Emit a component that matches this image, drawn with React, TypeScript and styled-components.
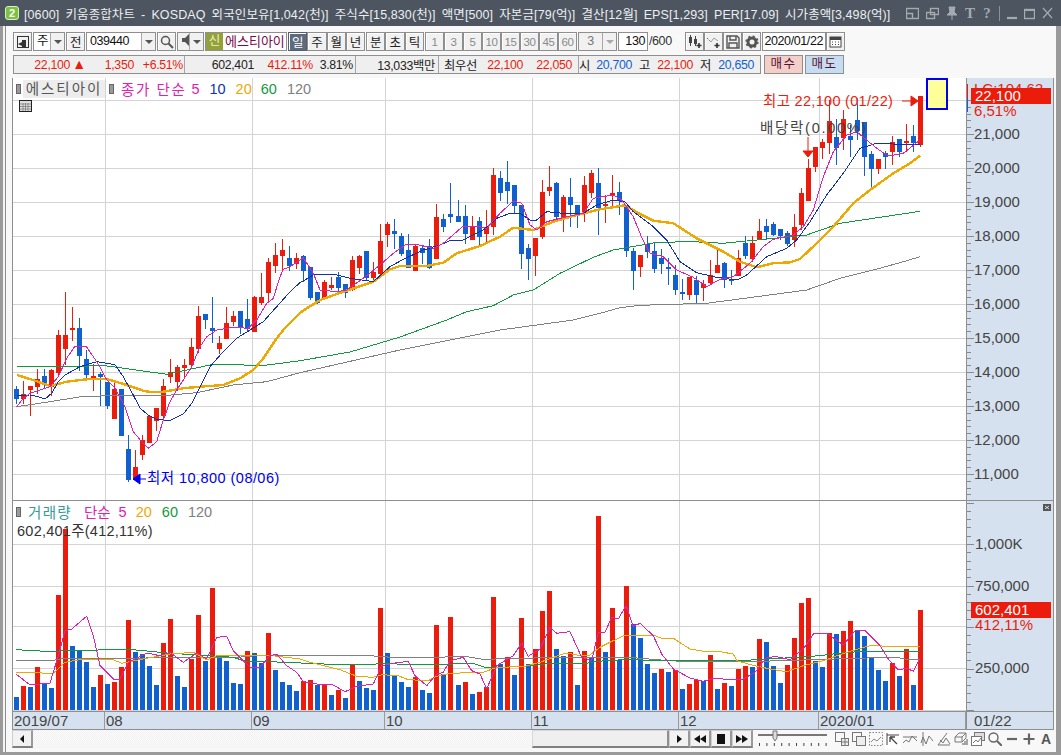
import React from 'react';
import styled, { createGlobalStyle } from 'styled-components';

const RED = '#ec1c0c';
const BLUE = '#1160cf';
const ORANGE = '#f0a800';
const GREEN = '#0f9a3e';
const GRAY = '#808080';
const MAGENTA = '#e020b0';
const NAVY = '#1030b0';
const FONT = `"Liberation Sans", "Noto Sans CJK KR", sans-serif`;

const GlobalStyle = createGlobalStyle`
  html, body { margin: 0; padding: 0; background: #999; overflow: hidden; }
  * { box-sizing: border-box; }
`;

const Window = styled.div`
  width: 1061px; height: 755px; display: flex; flex-direction: column;
  background: #9a9a9a; font-family: ${FONT}; overflow: hidden;
`;
const TitleBar = styled.div`
  height: 26px; flex: none; background: #4d5560; display: flex; align-items: center; padding-left: 5px;
`;
const AppBadge = styled.div`
  width: 14px; height: 14px; border-radius: 3px; background: #7cc242; border: 1px solid #d8f0c0;
  color: #fff; font: bold 11px/12px ${FONT}; text-align: center; flex: none;
`;
const TitleText = styled.div`
  margin-left: 5px; width: 880px; flex: none; color: #eceef0; font-size: 12.5px; letter-spacing: 0.1px; word-spacing: 2.5px; white-space: nowrap; overflow: hidden;
`;
const TitleTools = styled.div`
  display: flex; align-items: center; gap: 7px; color: #a4aab2; margin-left: 2px; flex: none;
`;
const TitleGlyph = styled.span`
  font: bold 15px/16px "Liberation Serif", serif; width: 10px; text-align: center; color: #a4aab2;
`;
const TitleDivider = styled.span`
  width: 1px; height: 15px; background: #8b919a;
`;
const Frame = styled.div`
  flex: 1; margin: 0 5px 3px 3px; border-left: 2px solid #f4f4f4; background: #f8f8f8; display: flex; min-height: 0;
`;
const Content = styled.div`
  flex: 1; border-left: 1px solid #8d8d8d; padding: 6px 2px 0 6px; display: flex; flex-direction: column; min-width: 0;
`;
const ToolRow = styled.div`
  height: 19px; flex: none; display: flex; gap: 1px; padding-left: 1px; color: #222; font-size: 13px;
`;
const ToolButton = styled.div<{ $w?: number; $active?: boolean; $off?: boolean }>`
  width: ${p => (p.$w ? `${p.$w}px` : 'auto')}; flex: ${p => (p.$w ? 'none' : '1')}; height: 19px;
  display: flex; align-items: center; justify-content: center;
  border: 1px solid ${p => (p.$active ? '#55606e' : '#8f8f8f')};
  background: ${p => (p.$active ? '#5d6b7d' : '#f1f1f1')};
  color: ${p => (p.$active ? '#fff' : p.$off ? '#8a8a8a' : '#222')};
  font-size: ${p => (p.$off ? 11.5 : 12.5)}px; letter-spacing: -0.3px;
  box-shadow: inset 1px 1px 0 #fff;
`;
const CalendarButton = styled(ToolButton)`
  margin-left: -1px;
`;
const ButtonGroup = styled.div<{ $w: number }>`
  width: ${p => p.$w}px; display: flex; flex: none;
`;
const Combo = styled.div<{ $w: number }>`
  width: ${p => p.$w}px; height: 19px; flex: none; display: flex; background: #fff; border: 1px solid #8f8f8f;
`;
const ComboText = styled.div<{ $off?: boolean; $align?: string }>`
  flex: 1; padding: 0 3px; line-height: 17px; font-size: 12.5px; letter-spacing: -0.45px; color: ${p => (p.$off ? '#777' : '#111')};
  text-align: ${p => p.$align || 'left'}; white-space: nowrap; overflow: hidden; background: ${p => (p.$off ? '#f1f1f1' : '#fff')};
`;
const ComboArrow = styled.div<{ $off?: boolean }>`
  width: 14px; flex: none; background: #f1f1f1; border-left: 1px solid #a8a8a8; position: relative;
  &::after {
    content: ''; position: absolute; left: 3px; top: 7px; border-left: 4px solid transparent; border-right: 4px solid transparent;
    border-top: 4px solid ${p => (p.$off ? '#aaa' : '#555')};
  }
`;
const SignalTag = styled.div`
  width: 17px; background: #94a03a; color: #eef2c0; font-size: 12.5px; line-height: 17px; text-align: center; flex: none;
`;
const StockName = styled.div`
  flex: 1; color: #7c0a47; font-size: 13px; line-height: 17px; padding-left: 2px; white-space: nowrap; overflow: visible;
`;
const NumberField = styled.div<{ $w: number }>`
  width: ${p => p.$w}px; height: 19px; flex: none; background: #fff; border: 1px solid #8f8f8f; text-align: right;
  font-size: 12.5px; line-height: 17px; padding-right: 2px; letter-spacing: -0.4px; color: #111; white-space: nowrap;
`;
const Slash = styled.div`
  width: 35px; flex: none; font-size: 12.5px; line-height: 19px; color: #333; letter-spacing: -0.4px;
`;
const InfoRow = styled.div`
  height: 19px; margin-top: 4px; flex: none; display: flex; padding-left: 1px;
`;
const InfoBar = styled.div`
  width: 748px; display: flex; border: 1px solid #8f8f8f; background: #efefef; flex: none;
`;
const InfoCell = styled.div<{ $w: number; $last?: boolean }>`
  width: ${p => p.$w}px; flex: none; display: flex; align-items: center; border-right: ${p => (p.$last ? 'none' : '1px solid #a5a5a5')};
`;
const Value = styled.span<{ $w: number; $c?: string; $left?: boolean }>`
  width: ${p => p.$w}px; flex: none; text-align: ${p => (p.$left ? 'left' : 'right')}; color: ${p => p.$c || '#222'};
  font-size: 12.3px; letter-spacing: -0.3px; white-space: nowrap;
`;
const UpMark = styled.span`
  font-size: 14px; line-height: 14px; margin-left: 2px; letter-spacing: 0;
`;
const TradeButton = styled.div<{ $bg: string; $first?: boolean }>`
  width: 39px; height: 19px; margin-left: ${p => (p.$first ? 3 : 2)}px; flex: none; background: ${p => p.$bg}; border: 1px solid #8f8f8f;
  font-size: 12.5px; line-height: 17px; text-align: center; color: #5a1030; letter-spacing: 1.5px;
`;
const ChartBox = styled.div`
  margin-top: 4px; width: 1042px; flex: none; display: grid; grid-template-columns: 954px 87px; grid-template-rows: 423px 211px 18px;
  border-left: 1px solid #8f8f8f;
`;
const Pane = styled.div`
  position: relative; background: #fff; overflow: hidden; border-right: 1px solid #8f8f8f;
  border-bottom: 1px solid #8f8f8f;
`;
const AxisPane = styled.div`
  position: relative; background: #d6e1ef; overflow: hidden; border-right: 1px solid #8f8f8f; border-bottom: 1px solid #8f8f8f;
`;
const Drawing = styled.svg`
  display: block; position: absolute; left: 0; top: 0;
  text { font-family: ${FONT}; font-size: 15px; }
`;
const Legend = styled.div<{ $top: number }>`
  position: absolute; left: 3px; top: ${p => p.$top}px; height: 17px; display: flex; align-items: center; font-size: 14.5px; white-space: nowrap;
`;
const Marker = styled.span`
  width: 5px; height: 10px; background: #9a9a9a; border: 1px solid #666; flex: none;
`;
const NameTag = styled.span`
  width: 82px; height: 18px; margin: 0 4px 0 2px; background: #ededed; color: #555; font-size: 14.5px; line-height: 18px;
  text-align: center; letter-spacing: 2px; flex: none;
`;
const LegendItem = styled.span<{ $c: string; $ml: number; $ls?: number }>`
  color: ${p => p.$c}; margin-left: ${p => p.$ml}px; letter-spacing: ${p => p.$ls || 0}px;
`;
const VolumeNote = styled.div`
  position: absolute; left: 4px; top: 18px; font-size: 14.5px; letter-spacing: 0.25px; color: #333; white-space: nowrap;
`;
const GridIcon = styled.svg`
  position: absolute; left: 6px; top: 22px;
`;
const Note = styled.div<{ $x: number; $y: number; $c: string; $ls: number }>`
  position: absolute; left: ${p => p.$x - 13}px; top: ${p => p.$y - 78}px; color: ${p => p.$c}; font-size: 14.5px; line-height: 17px; white-space: nowrap;
  letter-spacing: ${p => p.$ls}px;
`;
const TimeScale = styled.div`
  background: #d6e1ef; position: relative; border-right: 1px solid #8f8f8f; border-bottom: 1px solid #8f8f8f; display: flex;
  font-size: 15px; line-height: 17px; color: #444;
`;
const TimeCell = styled.div<{ $w: number }>`
  width: ${p => p.$w}px; flex: none; padding-left: 1px; border-right: 1px solid #9a9a9a; white-space: nowrap; overflow: hidden;
`;
const TimeEnd = styled.div`
  background: #d6e1ef; border-right: 1px solid #8f8f8f; border-bottom: 1px solid #8f8f8f; padding-left: 7px;
  font-size: 15px; line-height: 17px; color: #444;
`;
const BottomBar = styled.div`
  flex: none; height: 20px; width: 1042px; display: flex; align-items: flex-start; margin-left: 0;
`;
const StepButton = styled.div<{ $w: number }>`
  width: ${p => p.$w}px; height: 18px; flex: none; display: flex; align-items: center; justify-content: center;
  background: #f2f2f2; border: 1px solid #cfcfcf; border-bottom: 2px solid #7f7f7f; border-right: 2px solid #9a9a9a;
`;
const Track = styled.div`
  width: 499px; height: 18px; flex: none;
  background: repeating-conic-gradient(#f1f1f1 0 25%, #fbfbfb 0 50%) 0 0 / 2px 2px;
`;
const Thumb = styled.div`
  width: 137px; height: 18px; flex: none; background: #efefef; border: 1px solid #d8d8d8; border-bottom: 2px solid #7f7f7f; border-right: 2px solid #8f8f8f;
`;
const SliderBox = styled.svg`
  flex: none; margin-left: 5px;
`;
const IconStrip = styled.div`
  display: flex; gap: 3px; margin-left: 7px; height: 18px; align-items: center;
`;
const StripIcon = styled.div<{ $on?: boolean }>`
  width: 14px; height: 18px; flex: none; display: flex; align-items: center; justify-content: center;
  background: ${p => (p.$on ? '#fff' : 'transparent')}; box-shadow: ${p => (p.$on ? '0 0 0 1px #fff' : 'none')};
  font: bold 14px/16px ${FONT}; color: #555;
`;

type Pt = [number, number];
const at = (x0: number, y0: number, a: number[]): Pt[] => {
  const r: Pt[] = [];
  for (let i = 0; i < a.length; i += 2) r.push([x0 + a[i] / 3, y0 + a[i + 1] / 3]);
  return r;
};
const pts = (p: Pt[]) => p.map(q => `${q[0].toFixed(1)},${q[1].toFixed(1)}`).join(' ');

type C = [number, number, number, number, number];
// colour (1 red, 0 blue), body top, body bottom, wick top, wick bottom, in crop coordinates
const c5: C[] = [
  [0,357,387,348,402],[1,372,387,333,402],[1,348,360,348,438],[1,327,351,297,372],[0,318,345,297,354],[1,300,351,297,378],
  [1,195,309,180,318],[1,195,237,66,285],[1,174,177,111,213],[0,174,258,144,303],[0,267,315,240,324],[1,318,330,282,363],
  [0,312,320,305,408],[0,336,408,336,417],[1,357,447,333,447],[0,357,498,357,498],[0,537,630,495,636],[1,591,630,540,630],
  [1,510,555,495,570],[1,438,519,438,519],[1,414,453,414,483],[1,348,438,327,450],[1,306,321,267,339],[1,291,336,285,363],
  [1,285,294,267,321],[1,231,285,204,294],[1,138,237,108,249],[0,132,150,132,177],[0,174,183,81,219],[1,219,237,198,252],
  [1,159,207,111,207],[1,138,156,123,168],[0,123,171,123,192],[0,147,177,87,186],[1,81,186,78,186],[1,81,99,9,105],
];
const c11: C[] = [[1,126,219,114,250],[1,105,138,69,159],[1,90,108,57,150],[0,114,138,78,153],[1,114,132,99,147]];
const c6: C[] = [
  [0,318,363,315,396],[0,351,444,351,450],[0,426,459,426,462],[1,396,444,390,450],[1,405,414,381,420],[0,380,414,366,429],
  [0,402,429,402,444],[1,330,420,318,423],[1,318,354,315,372],[0,303,384,303,390],[1,366,384,336,393],[1,273,372,222,381],
  [1,222,255,216,291],[0,243,252,207,297],[0,258,312,249,318],[0,300,354,252,354],[1,288,363,282,363],[0,294,309,288,342],
  [0,288,354,267,357],[1,201,327,162,327],[0,207,231,192,246],[0,192,201,99,219],[0,198,216,150,216],[0,198,252,165,282],
  [1,228,270,198,270],[0,213,261,201,291],[1,231,252,180,276],[1,75,231,54,255],[0,84,129,63,153],[0,96,123,33,162],
  [0,105,168,105,192],[0,165,312,165,357],[0,294,327,282,390],[1,264,318,264,378],[1,126,262,90,267],[1,111,123,48,138],
  [0,99,201,96,207],[1,141,201,135,246],[0,141,165,84,231],[0,165,189,165,234],[1,105,189,78,216],[1,69,129,60,144],
  [0,99,174,54,255],[1,162,168,135,219],[1,129,138,75,171],[0,126,153,96,195],[0,165,303,165,321],[0,303,363,295,420],
];
const c7: C[] = [
  [1,525,562,525,590],[0,492,516,468,534],[0,513,567,486,579],[0,534,552,507,582],[0,561,566,534,615],[0,585,630,555,645],
  [0,636,639,597,660],[1,591,645,591,660],[0,600,645,588,669],[1,612,624,600,663],[1,585,609,540,612],[1,555,579,501,579],
  [0,549,600,546,624],[0,597,603,570,615],[1,534,588,510,588],[0,489,528,468,537],[1,489,537,468,546],[1,453,480,417,480],
  [0,438,456,417,480],[0,432,465,426,468],[0,447,468,447,480],[0,459,492,453,498],[1,441,480,402,501],[1,339,435,324,450],
  [1,264,363,237,363],[1,201,261,201,276],[1,186,204,177,237],[1,123,189,60,222],[0,171,204,117,255],[1,117,174,90,210],
  [0,168,180,135,231],[0,120,153,54,180],[0,126,231,126,288],[0,222,267,213,324],[1,237,267,237,282],[0,219,231,213,267],
  [1,186,216,168,255],[0,177,216,177,231],[1,183,189,132,216],[0,168,189,135,216],[1,48,195,48,201],
];
const scale = (list: C[], y0: number): C[] => list.map(([k, a, b, d, e]) => [k, y0 + a / 3, y0 + b / 3, y0 + d / 3, y0 + e / 3]);
const CANDLES: C[] = [...scale(c5, 270), ...scale(c11, 220), ...scale(c6, 150), ...scale(c7, 80)];

const barX = (i: number) => Math.round(14 + 7.008 * i);

// colour, crop y of the top of the bar
const V: [number, number][] = [
  [0,594],[1,561],[0,564],[1,504],[0,552],[0,567],[1,288],[1,90],[0,441],[0,455],[0,489],[0,564],[1,528],[0,555],[1,549],[1,504],[1,363],
  [0,459],[0,465],[0,501],[0,558],[1,432],[1,360],[0,531],[0,564],[1,480],[1,348],[0,486],[1,267],[0,477],[0,486],[0,552],[0,555],[1,456],
  [0,462],[0,492],[1,402],[0,513],[0,549],[0,558],[0,576],[1,546],[1,543],[0,558],[1,558],[0,588],[1,573],
  [0,597],[1,498],[0,546],[0,567],[0,573],[1,327],[0,462],[0,531],[0,549],[0,564],[1,534],[0,573],[0,582],[1,378],[0,525],[1,354],[0,558],
  [1,549],[0,585],[1,579],[1,564],[1,294],[0,495],[1,474],[0,528],[1,357],[0,495],[1,450],[1,336],[1,276],[0,450],[0,471],[1,460],[0,558],
  [1,456],[0,474],[1,51],[0,459],[1,327],[0,483],[1,261],[0,375],[0,417],[0,495],[0,522],[1,510],[0,519],[1,513],
  [0,570],[1,555],[1,543],[0,546],[1,468],[0,570],[1,552],[0,561],[1,510],[1,501],[0,504],[1,420],[0,429],[0,501],[0,552],[1,498],[1,417],
  [1,312],[1,297],[0,486],[0,504],[1,402],[0,405],[1,396],[1,366],[0,393],[0,411],[0,477],[0,513],[0,546],[1,492],[0,531],[1,450],[0,558],[1,333],
];

const line5 = [
  ...at(0,270,[50,410,70,385,90,370,115,362,150,350,175,320,200,265,225,228,258,228,280,260,300,290,320,330,345,355,375,410,400,485,425,515,445,535,470,515,490,450,510,395,530,360,550,330,575,290,600,230,620,200,650,180,700,172,745,175,770,150,800,100]),
  ...at(240,220,[100,235,120,170,130,148,150,140,190,113]),
  ...at(300,150,[40,370,60,420,110,425,140,420,190,385,240,345,280,310,320,282,345,282,400,295,430,280,490,228,530,228,560,235,600,190,640,153,665,160,690,225,710,240,740,215,800,200,850,190,880,145,940,135,965,150,1000,200,1020,250]),
  ...at(640,80,[0,462,30,520,70,530,110,570,160,592,200,620,240,598,280,590,330,550,370,500,400,478,460,465,490,440,520,390,550,290,580,215,620,165,650,155,680,180,710,205,745,228,790,220,840,180]),
];
const line10 = [
  ...at(0,270,[50,376,90,375,115,380,135,387,155,370,175,335,195,315,240,290,290,275,345,284,370,320,400,375,420,415,445,435,470,448,510,452,550,432,575,400,600,350,630,290,665,250,710,205,750,180,790,155,830,110,870,65,900,38]),
  ...at(300,150,[40,375,100,372,150,385,220,395,270,350,310,328,370,300,420,285,450,272,490,270,550,240,590,205,630,190,660,190,690,210,710,210,740,185,790,190,850,190,890,165,940,150,975,155,1000,185,1020,200]),
  ...at(640,80,[40,440,80,480,120,545,170,578,230,592,290,600,320,585,380,530,440,505,470,480,510,425,560,345,610,280,660,205,710,190,780,193,840,195]),
];
const line20 = [
  ...at(0,270,[50,315,100,330,150,348,200,335,260,328,320,327,380,345,430,362,450,366,490,365,550,355,600,350,670,345,720,325,760,300,790,265,830,205,850,180,900,128]),
  ...at(300,150,[60,450,130,425,220,395,270,358,300,348,380,348,430,338,470,310,540,288,600,260,640,233,700,240,760,215,830,195,900,178,975,166,1020,192]),
  ...at(640,80,[40,422,100,430,170,475,250,515,300,545,350,562,400,550,450,547,480,537,530,490,580,440,640,370,690,330,760,280,810,250,840,227]),
];
const line60: Pt[] = [
  ...at(0,270,[50,290,240,290,300,285,360,293,430,303,500,313,560,300,630,285,700,283,780,288,900,272]),
  [350,352],[400,337],
  ...at(300,150,[440,510,500,485,580,467,640,435,700,420,780,370,880,322,940,300,1020,286]),
  ...at(640,80,[50,487,160,485,250,490,350,480,500,465,600,430,700,415,840,394]),
];
const line120: Pt[] = [
  ...at(0,270,[50,410,150,395,250,379,350,377,480,378,590,368,700,345,800,335,900,308]),
  [400,350],[500,330],
  ...at(300,150,[820,510,900,490,960,473,1020,466]),
  ...at(640,80,[200,670,350,650,500,630,600,595,700,570,780,548,840,530]),
];

const vol5 = [
  ...at(0,500,[48,525,90,558,150,552,175,470,195,395,215,390,260,352,280,410,300,500,340,540,360,540,385,490,440,462,480,470,510,460,550,490,590,462,620,480,650,415,680,412,700,455,735,490,750,505,780,505,810,470,830,465,860,500,890,520,910,548,950,555,1000,558]),
  ...at(340,500,[15,578,50,562,100,555,125,500,150,495,175,490,205,488,225,530,260,560,290,525,310,520,330,485,370,475,395,515,420,525,440,570,470,500,520,470,545,432,565,472,600,450,630,385,650,403,690,398,725,475,755,485,775,400,795,400,815,355,835,360,858,320,880,382,900,373,940,410,965,465,1000,510]),
  ...at(680,500,[30,537,70,547,100,538,160,542,190,540,225,520,260,475,290,473,330,482,370,450,400,405,440,402,490,438,525,395,555,395,600,440,625,480,655,513,680,508,700,517,720,478]),
];
const vol20 = [
  ...at(0,500,[48,520,160,523,195,490,250,480,335,480,365,493,440,478,510,465,580,460,620,483,650,470,800,468,900,480,930,490,1020,512]),
  ...at(340,500,[50,532,100,535,125,527,175,530,205,542,265,545,290,532,330,523,430,520,470,505,550,503,600,490,660,468,680,462,710,468,750,468,780,445,850,410,940,408,965,418,1000,418]),
  ...at(680,500,[30,450,70,457,120,458,160,465,170,485,215,498,270,510,320,518,370,500,430,485,500,460,570,440,640,442,720,443]),
];
const vol60 = [
  ...at(0,500,[48,452,160,458,195,454,400,452,500,462,700,475,740,488,810,488,1020,497]),
  ...at(340,500,[100,496,140,492,200,498,280,497,400,493,440,507,580,500,620,494,740,493,770,487,850,482,1020,485]),
  ...at(680,500,[180,485,300,478,420,470,500,460,570,457,720,457]),
];
const vol120 = [
  ...at(0,500,[48,484,160,484,190,478,700,476,780,469,1020,469]),
  ...at(340,500,[90,470,170,476,380,473,430,481,620,476,880,476,950,482,1020,487]),
  ...at(680,500,[200,488,400,482,560,477,650,475,680,481,720,481]),
];

const MONTHS = [105, 252, 385, 532, 679, 819];
const Line = ({ p, c, w }: { p: Pt[]; c: string; w: number }) => (
  <polyline points={pts(p)} fill="none" stroke={c} strokeWidth={w} strokeLinejoin="round" shapeRendering="crispEdges" />
);

const PricePlot = () => (
  <Drawing width={953} height={422} viewBox="13 78 953 422">
    {MONTHS.map(x => <rect key={x} x={x} y={78} width={1} height={422} fill="#d4d4d4" />)}
    {Array.from({ length: 12 }, (_, k) => <rect key={k} x={13} y={100 + 34 * k} width={953} height={1} fill="#d4d4d4" />)}
    {CANDLES.map(([k, a, b, d, e], i) => (
      <g key={i} fill={k ? RED : BLUE} shapeRendering="crispEdges">
        <rect x={barX(i) + 2} y={Math.round(d)} width={1} height={Math.max(1, Math.round(e - d))} />
        <rect x={barX(i)} y={Math.round(a)} width={5} height={Math.max(2, Math.round(b - a))} />
      </g>
    ))}
    <Line p={line120} c={GRAY} w={1} />
    <Line p={line60} c={GREEN} w={1} />
    <Line p={line20} c={ORANGE} w={2.4} />
    <Line p={line10} c={NAVY} w={1} />
    <Line p={line5} c={MAGENTA} w={1} />
    <rect x={927} y={79} width={20} height={30} fill="#ffff99" stroke="#0000ee" strokeWidth={2} />
    <path d="M902 101h10M911 96l7 5-7 5z" stroke={RED} fill={RED} />
    <path d="M808 137v14M803 151h10l-5 6z" stroke={RED} fill={RED} />
    <path d="M146 479h-8M140 474l-7 5 7 5z" stroke="#0000ee" fill="#0000ee" />
  </Drawing>
);

const VolumePlot = () => (
  <Drawing width={953} height={210} viewBox="13 502 953 210">
    {MONTHS.map(x => <rect key={x} x={x} y={502} width={1} height={210} fill="#d4d4d4" />)}
    {[545, 587, 627, 669, 711].map(y => <rect key={y} x={13} y={y} width={953} height={1} fill="#d4d4d4" />)}
    {V.map(([k, t], i) => (
      <rect key={i} x={barX(i)} y={Math.round(500 + t / 3)} width={5} height={711 - Math.round(500 + t / 3)} fill={k ? RED : BLUE} shapeRendering="crispEdges" />
    ))}
    <Line p={vol120} c={GRAY} w={1} />
    <Line p={vol60} c={GREEN} w={1} />
    <Line p={vol20} c={ORANGE} w={1} />
    <Line p={vol5} c={MAGENTA} w={1} />
  </Drawing>
);

const PRICES = [21, 20, 19, 18, 17, 16, 15, 14, 13, 12, 11];
const PriceAxis = () => (
  <Drawing width={86} height={422} viewBox="967 78 86 422">
    {Array.from({ length: 60 }, (_, k) => {
      const y = 100 + k * 6.8;
      return <rect key={k} x={967} y={Math.round(y)} width={k % 5 === 0 ? 7 : 4} height={1} fill="#8a8a8a" shapeRendering="crispEdges" />;
    })}
    {PRICES.map((p, i) => (
      <text key={p} x={974} y={139 + 34 * i} fill="#444">{`${p},000`}</text>
    ))}
    <text x={974} y={94} fill={RED}>LC:104.63</text>
    <rect x={967} y={84} width={1} height={14} fill={RED} />
    <rect x={967} y={98} width={1} height={14} fill={BLUE} />
    <rect x={971} y={88} width={80} height={16} fill={RED} />
    <text x={975} y={101} fill="#fff">22,100</text>
    <text x={974} y={116} fill={RED}>6,51%</text>
  </Drawing>
);
const VolumeAxis = () => (
  <Drawing width={86} height={210} viewBox="967 502 86 210">
    {Array.from({ length: 26 }, (_, k) => {
      const y = 711 - k * 8.3;
      return <rect key={k} x={967} y={Math.round(y)} width={k % 5 === 0 ? 7 : 4} height={1} fill="#8a8a8a" shapeRendering="crispEdges" />;
    })}
    <text x={975} y={550} fill="#444">1,000K</text>
    <text x={975} y={592} fill="#444">750,000</text>
    <text x={975} y={674} fill="#444">250,000</text>
    <rect x={971} y={603} width={80} height={16} fill={RED} />
    <text x={975} y={616} fill="#fff">602,401</text>
    <text x={975} y={631} fill={RED}>412,11%</text>
    <rect x={1043} y={505} width={8} height={7} fill="#555" />
    <path d="M1045 507l4 3M1049 507l-4 3" stroke="#fff" strokeWidth={0.8} />
  </Drawing>
);

const S = ({ w = 14, h = 14, children }: { w?: number; h?: number; children: React.ReactNode }) => (
  <svg width={w} height={h} viewBox={`0 0 ${w} ${h}`} fill="none" stroke="currentColor" strokeWidth={1}>{children}</svg>
);

const Play = ({ d }: { d: string }) => (
  <svg width={14} height={10} viewBox="0 0 14 10"><path d={d} fill="#111" /></svg>
);

export default function App() {
  return (
    <Window>
      <GlobalStyle />
      <TitleBar>
        <AppBadge>2</AppBadge>
        <TitleText>[0600] 키움종합차트 - KOSDAQ 외국인보유[1,042(천)] 주식수[15,830(천)] 액면[500] 자본금[79(억)] 결산[12월] EPS[1,293] PER[17.09] 시가총액[3,498(억)]</TitleText>
        <TitleTools>
          <S w={13} h={13}><rect x={.5} y={1.5} width={12} height={10} strokeWidth={1.4} /><path d="M.5 6.5h6v5" strokeWidth={1.4} /></S>
          <S w={13} h={13}><rect x={4.5} y={1.5} width={8} height={6} strokeWidth={1.4} /><rect x={.5} y={5.5} width={8} height={6} strokeWidth={1.4} /></S>
          <S w={12} h={14}><path d="M3 1h6l-1 5 3 3H1l3-3zM6 9v5" fill="currentColor" /></S>
          <TitleGlyph>T</TitleGlyph>
          <TitleGlyph>?</TitleGlyph>
          <TitleDivider />
          <S w={10} h={14}><path d="M0 12h10" strokeWidth={2.2} /></S>
          <S w={11} h={13}><rect x={.5} y={2.5} width={10} height={9} strokeWidth={1.4} /><path d="M1 3h9" strokeWidth={2} /></S>
          <S w={11} h={12}><path d="M1 1l9 10M10 1L1 11" strokeWidth={1.2} /></S>
        </TitleTools>
      </TitleBar>
      <Frame>
        <Content>
          <ToolRow>
            <ToolButton $w={19}><S><rect x={1.5} y={1.5} width={11} height={11} stroke="#333" /><rect x={6} y={5} width={4} height={8} fill="#333" stroke="none" /><path d="M6 7L2 9l4 2z" fill="#333" stroke="none" /></S></ToolButton>
            <Combo $w={32}><ComboText $align="center">주</ComboText><ComboArrow /></Combo>
            <ToolButton $w={19}>전</ToolButton>
            <Combo $w={70}><ComboText>039440</ComboText><ComboArrow /></Combo>
            <ToolButton $w={19}><svg width={14} height={14} viewBox="0 0 14 14" fill="none" stroke="#555" strokeWidth={1.5}><circle cx={5.5} cy={5.5} r={4} /><path d="M8.5 8.5l4.5 4.5" strokeWidth={2} /></svg></ToolButton>
            <Combo $w={27}>
              <ComboText $off><svg width={12} height={14} viewBox="0 0 12 14"><path d="M1 5h3l4-4v12L4 9H1z" fill="#555" /><path d="M9.5 5v1M9.5 8v1" stroke="#555" /></svg></ComboText>
              <ComboArrow />
            </Combo>
            <Combo $w={82}><SignalTag>신</SignalTag><StockName>에스티아이</StockName></Combo>
            <ButtonGroup $w={77}>
              <ToolButton $active>일</ToolButton><ToolButton>주</ToolButton><ToolButton>월</ToolButton><ToolButton>년</ToolButton>
            </ButtonGroup>
            <ButtonGroup $w={58}>
              <ToolButton>분</ToolButton><ToolButton>초</ToolButton><ToolButton>틱</ToolButton>
            </ButtonGroup>
            <ButtonGroup $w={152}>
              {['1', '3', '5', '10', '15', '30', '45', '60'].map(t => <ToolButton key={t} $off>{t}</ToolButton>)}
            </ButtonGroup>
            <Combo $w={39}><ComboText $off $align="center">3</ComboText><ComboArrow $off /></Combo>
            <NumberField $w={30}>130</NumberField>
            <Slash>/600</Slash>
            <ButtonGroup $w={76}>
              <ToolButton><svg width={15} height={14} viewBox="0 0 15 14"><path d="M2 2h3v6H2zM7 4h3v5H7z" fill="#444" /><path d="M3.5 0v11M8.5 1v10" stroke="#444" /><path d="M12 8v5M9.5 10.5h5" stroke="#333" strokeWidth={1.6} /></svg></ToolButton>
              <ToolButton><svg width={15} height={14} viewBox="0 0 15 14" fill="none"><path d="M1 3l4 4 3-4 4 3" stroke="#666" strokeDasharray="1.5 1" /><path d="M11 8v5M8.5 10.5h5" stroke="#333" strokeWidth={1.6} /></svg></ToolButton>
              <ToolButton><svg width={14} height={14} viewBox="0 0 14 14" fill="none" stroke="#555" strokeWidth={1.4}><path d="M1 1h10l2 2v10H1z" /><path d="M4 1v4h6V1M3 13V8h8v5" /></svg></ToolButton>
              <ToolButton><svg width={14} height={14} viewBox="0 0 14 14"><circle cx={7} cy={7} r={4} fill="none" stroke="#555" strokeWidth={3} /><circle cx={7} cy={7} r={5.6} fill="none" stroke="#555" strokeWidth={2} strokeDasharray="2 2.4" /></svg></ToolButton>
            </ButtonGroup>
            <NumberField $w={64}>2020/01/22</NumberField>
            <CalendarButton $w={19}><svg width={13} height={12} viewBox="0 0 13 12"><rect x={1} y={1} width={11} height={10} fill="#fff" stroke="#444" /><rect x={1} y={1} width={11} height={3} fill="#444" /><path d="M3 6h1M6 6h1M9 6h1M3 8.5h1M6 8.5h1M9 8.5h1" stroke="#444" /></svg></CalendarButton>
          </ToolRow>
          <InfoRow>
            <InfoBar>
              <InfoCell $w={171}>
                <Value $w={72} $c={RED}>22,100<UpMark>▲</UpMark></Value><Value $w={48} $c={RED}>1,350</Value><Value $w={49} $c={RED}>+6.51%</Value>
              </InfoCell>
              <InfoCell $w={171}>
                <Value $w={69}>602,401</Value><Value $w={59} $c={RED}>412.11%</Value><Value $w={40}>3.81%</Value>
              </InfoCell>
              <InfoCell $w={83}><Value $w={79}>13,033백만</Value></InfoCell>
              <InfoCell $w={140}>
                <Value $w={38}>최우선</Value><Value $w={46} $c={RED}>22,100</Value><Value $w={49} $c={RED}>22,050</Value>
              </InfoCell>
              <InfoCell $w={181} $last>
                <Value $w={9}>시</Value><Value $w={44} $c={BLUE}>20,700</Value><Value $w={18}>고</Value><Value $w={43} $c={RED}>22,100</Value><Value $w={18}>저</Value><Value $w={43} $c={BLUE}>20,650</Value>
              </InfoCell>
            </InfoBar>
            <TradeButton $bg="#f3cfca" $first>매수</TradeButton>
            <TradeButton $bg="#c6dcf1">매도</TradeButton>
          </InfoRow>
          <ChartBox>
            <Pane>
              <PricePlot />
              <Legend $top={2}>
                <Marker /><NameTag>에스티아이</NameTag><Marker />
                <LegendItem $c={MAGENTA} $ml={7} $ls={1.6}>종가 단순</LegendItem>
                <LegendItem $c={MAGENTA} $ml={5}>5</LegendItem>
                <LegendItem $c={NAVY} $ml={10}>10</LegendItem>
                <LegendItem $c={ORANGE} $ml={10}>20</LegendItem>
                <LegendItem $c={GREEN} $ml={9}>60</LegendItem>
                <LegendItem $c={GRAY} $ml={10}>120</LegendItem>
              </Legend>
              <GridIcon width={13} height={12} viewBox="0 0 13 12"><rect x={.5} y={.5} width={12} height={11} fill="#ddd" stroke="#222" /><path d="M1 4h11M1 6.5h11M1 9h11M4 3v8M6.5 3v8M9 3v8" stroke="#666" strokeWidth={.6} /></GridIcon>
              <Note $x={763} $y={93} $c={RED} $ls={0.3}>최고 22,100 (01/22)</Note>
              <Note $x={760} $y={120} $c="#444" $ls={1.7}>배당락(0.00%)</Note>
              <Note $x={147} $y={470} $c="#0000ee" $ls={0.45}>최저 10,800 (08/06)</Note>
            </Pane>
            <AxisPane><PriceAxis /></AxisPane>
            <Pane>
              <VolumePlot />
              <Legend $top={2}>
                <Marker />
                <LegendItem $c="#339a99" $ml={7} $ls={1.3}>거래량</LegendItem>
                <LegendItem $c={MAGENTA} $ml={12}>단순</LegendItem>
                <LegendItem $c={MAGENTA} $ml={8}>5</LegendItem>
                <LegendItem $c={ORANGE} $ml={9}>20</LegendItem>
                <LegendItem $c={GREEN} $ml={10}>60</LegendItem>
                <LegendItem $c={GRAY} $ml={10}>120</LegendItem>
              </Legend>
              <VolumeNote>602,401주(412,11%)</VolumeNote>
            </Pane>
            <AxisPane><VolumeAxis /></AxisPane>
            <TimeScale>
              <TimeCell $w={92}>2019/07</TimeCell>
              <TimeCell $w={147}>08</TimeCell>
              <TimeCell $w={133}>09</TimeCell>
              <TimeCell $w={147}>10</TimeCell>
              <TimeCell $w={147}>11</TimeCell>
              <TimeCell $w={140}>12</TimeCell>
              <TimeCell $w={147}>2020/01</TimeCell>
            </TimeScale>
            <TimeEnd>01/22</TimeEnd>
          </ChartBox>
          <BottomBar>
            <StepButton $w={21}><Play d="M5 5l4-4v8z" /></StepButton>
            <Track />
            <Thumb />
            <StepButton $w={21}><Play d="M5 1l5 4-5 4z" /></StepButton>
            <StepButton $w={21}><Play d="M1 5l6-4v8zM7 5l6-4v8z" /></StepButton>
            <StepButton $w={21}><Play d="M3 0h8v10H3z" /></StepButton>
            <StepButton $w={21}><Play d="M1 1l6 4-6 4zM7 1l6 4-6 4z" /></StepButton>
            <SliderBox width={70} height={18} viewBox="0 0 70 18">
              <path d="M0 5h69" stroke="#777" strokeWidth={2} />
              <path d="M15 1h4v7l-2 3-2-3z" fill="#ddd" stroke="#777" />
              {Array.from({ length: 10 }, (_, k) => <rect key={k} x={1 + k * 7.4} y={13} width={1} height={3} fill="#444" />)}
            </SliderBox>
            <IconStrip>
              <StripIcon><svg width={14} height={14} viewBox="0 0 14 14" fill="none" stroke="#777"><rect x={.5} y={.5} width={9} height={9} /><rect x={6.5} y={6.5} width={7} height={7} fill="#eee" /><path d="M10 7v6M7 10h6" /></svg></StripIcon>
              <StripIcon><svg width={14} height={14} viewBox="0 0 14 14" fill="none" stroke="#777"><rect x={.5} y={.5} width={9} height={9} /><rect x={4.5} y={4.5} width={9} height={9} fill="#eee" /></svg></StripIcon>
              <StripIcon><svg width={14} height={14} viewBox="0 0 14 14" fill="none" stroke="#888"><rect x={.5} y={.5} width={13} height={13} strokeDasharray="1.5 1.5" /><path d="M2 10l3-3 3 2 4-4" /></svg></StripIcon>
              <StripIcon $on><svg width={14} height={14} viewBox="0 0 14 14" fill="none" stroke="#444"><path d="M1 1v12M1 3h12" /><path d="M4 5l7 7M4 5h5M4 5v5" strokeWidth={1.3} /></svg></StripIcon>
              <StripIcon><svg width={14} height={14} viewBox="0 0 14 14" fill="none" stroke="#777"><path d="M0 5h14M0 11l3-3 3 2 3-6 5 5" /></svg></StripIcon>
              <StripIcon><svg width={14} height={14} viewBox="0 0 14 14" fill="none" stroke="#777"><path d="M3 0v14M1 11l2-6 3 7 3-8 4 5" /></svg></StripIcon>
              <StripIcon><svg width={14} height={14} viewBox="0 0 14 14" fill="none" stroke="#777"><path d="M1 13L10 1M1 13h12M3 8l3 3 3-5 4 6" /></svg></StripIcon>
              <StripIcon><svg width={14} height={14} viewBox="0 0 14 14" fill="none" stroke="#777"><path d="M1 5l4-4h7v5l-4 4H1zM1 5h7v5M8 5l4-4" /><path d="M9 13v-2M11 13V9M13 13V7" strokeWidth={1.3} /></svg></StripIcon>
              <StripIcon><svg width={14} height={14} viewBox="0 0 14 14" fill="none" stroke="#777"><rect x={3.5} y={.5} width={10} height={8} fill="#ddd" /><rect x={.5} y={4.5} width={10} height={9} fill="#fff" /><path d="M2 11l3-3 2 2 3-4" /></svg></StripIcon>
              <StripIcon><svg width={14} height={14} viewBox="0 0 14 14" fill="none" stroke="#666" strokeWidth={1.4}><circle cx={5.5} cy={5.5} r={4.5} /><path d="M9 9l5 5" strokeWidth={2} /></svg></StripIcon>
              <StripIcon><svg width={14} height={14} viewBox="0 0 14 14"><path d="M2 7h10" stroke="#666" strokeWidth={2.2} /></svg></StripIcon>
              <StripIcon><svg width={14} height={14} viewBox="0 0 14 14"><path d="M1.5 7h11M7 1.5v11" stroke="#666" strokeWidth={2.2} /></svg></StripIcon>
              <StripIcon>A</StripIcon>
            </IconStrip>
          </BottomBar>
        </Content>
      </Frame>
    </Window>
  );
}
